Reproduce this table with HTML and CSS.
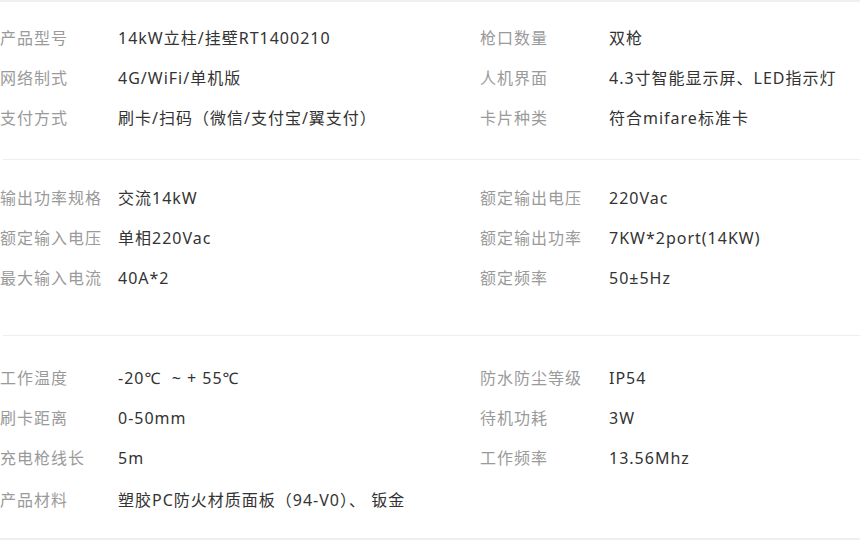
FILE: index.html
```html
<!DOCTYPE html>
<html lang="zh-CN">
<head>
<meta charset="utf-8">
<title>产品参数</title>
<link rel="stylesheet" href="styles.css">
</head>
<body>
<div class="spec">
  <div class="group group-1">
    <div class="label">产品型号</div><div class="value">14kW立柱/挂壁RT1400210</div>
    <div class="label">枪口数量</div><div class="value">双枪</div>
    <div class="label">网络制式</div><div class="value">4G/WiFi/单机版</div>
    <div class="label">人机界面</div><div class="value">4.3寸智能显示屏、LED指示灯</div>
    <div class="label">支付方式</div><div class="value">刷卡/扫码（微信/支付宝/翼支付）</div>
    <div class="label">卡片种类</div><div class="value">符合mifare标准卡</div>
  </div>
  <div class="divider"></div>
  <div class="group group-2">
    <div class="label">输出功率规格</div><div class="value">交流14kW</div>
    <div class="label">额定输出电压</div><div class="value">220Vac</div>
    <div class="label">额定输入电压</div><div class="value">单相220Vac</div>
    <div class="label">额定输出功率</div><div class="value">7KW*2port(14KW)</div>
    <div class="label">最大输入电流</div><div class="value">40A*2</div>
    <div class="label">额定频率</div><div class="value">50±5Hz</div>
  </div>
  <div class="divider"></div>
  <div class="group group-3">
    <div class="label">工作温度</div><div class="value">-20℃&nbsp; ~ + 55℃</div>
    <div class="label">防水防尘等级</div><div class="value">IP54</div>
    <div class="label">刷卡距离</div><div class="value">0-50mm</div>
    <div class="label">待机功耗</div><div class="value">3W</div>
    <div class="label">充电枪线长</div><div class="value">5m</div>
    <div class="label">工作频率</div><div class="value">13.56Mhz</div>
    <div class="label">产品材料</div><div class="value">塑胶PC防火材质面板（94-V0）、 钣金</div>
  </div>
</div>
</body>
</html>
```

FILE: styles.css
```css
html, body {
  margin: 0;
  padding: 0;
  background: #ffffff;
}

body {
  width: 860px;
  height: 540px;
  overflow: hidden;
  font-family: "Noto Sans", "Noto Sans CJK SC", sans-serif;
  font-size: 16px;
  letter-spacing: 1px;
}

.spec {
  border-top: 2px solid #efefef;
  border-bottom: 2px solid #efefef;
  height: 536px;
}

.group {
  display: grid;
  grid-template-columns: 118px 362px 129px 1fr;
  grid-auto-rows: 40px;
  align-items: center;
}

.group-1 {
  padding: 16px 0 21px;
}

.group-2 {
  padding: 18px 0 37px;
}

.group-3 {
  padding: 22px 0 20px;
}

.group-3 .value:last-child,
.group-3 .label:nth-last-child(2) {
  padding-top: 4px;
}

.label {
  color: #9a9a9a;
  white-space: nowrap;
  line-height: 40px;
}

.value {
  color: #333333;
  white-space: nowrap;
  line-height: 40px;
}

.divider {
  height: 1px;
  margin-left: 3px;
  background: #eeeeee;
}
```
